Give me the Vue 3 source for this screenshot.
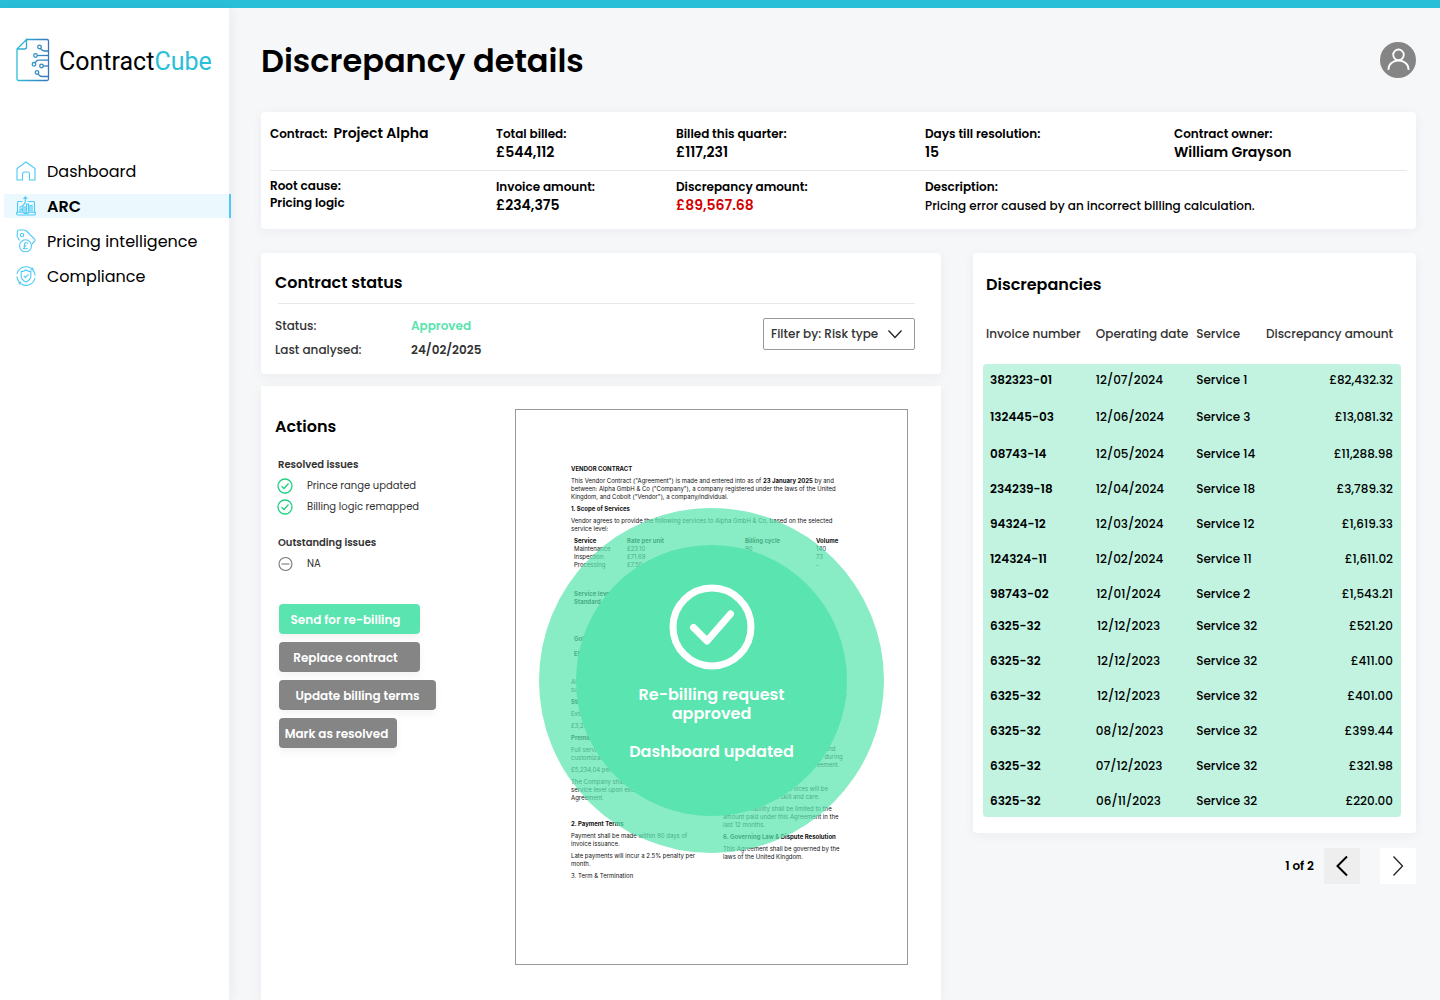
<script setup>
import { ref } from 'vue'

const filter = ref('risk')

const navItems = [
  { id: 'dashboard', label: 'Dashboard' },
  { id: 'arc', label: 'ARC', active: true },
  { id: 'pricing', label: 'Pricing intelligence' },
  { id: 'compliance', label: 'Compliance' },
]

const resolved = ['Prince range updated', 'Billing logic remapped']

const actions = [
  { label: 'Send for re-billing', kind: 'primary medium' },
  { label: 'Replace contract', kind: 'medium' },
  { label: 'Update billing terms', kind: 'large' },
  { label: 'Mark as resolved', kind: 'small' },
]

const discrepancies = [
  { invoice: '382323-01', date: '12/07/2024', service: 'Service 1', amount: '£82,432.32', size: 'roomy' },
  { invoice: '132445-03', date: '12/06/2024', service: 'Service 3', amount: '£13,081.32', size: 'roomy' },
  { invoice: '08743-14', date: '12/05/2024', service: 'Service 14', amount: '£11,288.98' },
  { invoice: '234239-18', date: '12/04/2024', service: 'Service 18', amount: '£3,789.32' },
  { invoice: '94324-12', date: '12/03/2024', service: 'Service 12', amount: '£1,619.33' },
  { invoice: '124324-11', date: '12/02/2024', service: 'Service 11', amount: '£1,611.02' },
  { invoice: '98743-02', date: '12/01/2024', service: 'Service 2', amount: '£1,543.21', size: 'tight' },
  { invoice: '6325-32', date: '12/12/2023', service: 'Service 32', amount: '£521.20' },
  { invoice: '6325-32', date: '12/12/2023', service: 'Service 32', amount: '£411.00' },
  { invoice: '6325-32', date: '12/12/2023', service: 'Service 32', amount: '£401.00' },
  { invoice: '6325-32', date: '08/12/2023', service: 'Service 32', amount: '£399.44' },
  { invoice: '6325-32', date: '07/12/2023', service: 'Service 32', amount: '£321.98' },
  { invoice: '6325-32', date: '06/11/2023', service: 'Service 32', amount: '£220.00', size: 'tight' },
]
</script>

<template>
  <div class="app">
    <div class="topbar"></div>
    <div class="shell">
      <aside class="sidebar">
        <a class="logo" href="#" aria-label="ContractCube">
          <svg width="34" height="44" viewBox="0 0 34 44" fill="none" stroke="url(#brand)" stroke-width="1.3">
            <defs>
              <linearGradient id="brand" gradientUnits="userSpaceOnUse" x1="0" y1="22" x2="34" y2="22">
                <stop offset="0" stop-color="#2abfd9" />
                <stop offset="1" stop-color="#3a72b8" />
              </linearGradient>
            </defs>
            <path d="M10.5 1.5H31a1.500 1.500 0 0 1 1.500 1.500V41a1.500 1.500 0 0 1-1.500 1.500H2.500A1.500 1.500 0 0 1 1 41V11L10.500 1.500V9a2 2 0 0 1-2 2H1" />
            <circle cx="23.500" cy="9" r="1.800" /><path d="M24.500 10.500q2 2.500 4 2.500H32.500" />
            <circle cx="19.500" cy="17.500" r="1.800" /><path d="M21.300 17.500H32.500" />
            <circle cx="18" cy="26.300" r="1.800" /><path d="M19 24.700l1.500-1.700q.7-.8 2-.8H32.500" />
            <circle cx="25.500" cy="28" r="1.800" /><path d="M27.300 28H32.500" />
            <circle cx="21" cy="34.500" r="1.800" /><path d="M22 36l1.500 1.500q1 1 2.500 1H32.500" />
          </svg>
          <span class="wordmark">Contract<b>Cube</b></span>
        </a>
        <nav class="nav">
          <a v-for="item in navItems" :key="item.id" href="#" class="nav-item" :class="{ active: item.active }">
            <svg v-if="item.id === 'dashboard'" width="20" height="20" viewBox="0 0 20 20">
              <path d="M1 7.500V19h5.500v-6q0-2 2-2h3q2 0 2 2v6H19V7.500L10 1z" />
            </svg>
            <svg v-else-if="item.id === 'arc'" width="20" height="20" viewBox="0 0 20 20">
              <path d="M6.500 5.500H2.500q-1 0-1 1V16M12 5.500h5.500q1 0 1 1V16M.7 16.300h18.600v1.400q0 1.300-1.300 1.300H2Q.7 19 .7 17.700zM7.500 17.500h5M4 15.500v-2.500h2v2.500M7 15.500V11h2v4.500M10.500 15.500V8h2v7.500M14 15.500V9.500h2v6M3.500 11.500Q8 9.500 9.300 6V1M7.500 2.800L9.300.8l1.800 2" />
            </svg>
            <svg v-else-if="item.id === 'pricing'" width="20" height="24" viewBox="0 0 20 24">
              <path d="M3.500 11.500L1.300 7.500q-.5-1 0-2V3Q1.300 1 3.300 1H8q1.500 0 2.500 1l8 8q1 1.300 0 2.500l-2.500 2.500" />
              <circle cx="6" cy="6" r="1.700" /><circle cx="9.500" cy="16.800" r="6" />
              <path d="M11.800 14.800q-.5-1.500-1.900-1.300t-1.400 1.800v2.200q0 1.300-1 2.300h4.300M7.500 17h3" />
            </svg>
            <svg v-else width="20" height="20" viewBox="0 0 20 20">
              <path d="M10 4q2 1.500 4.800 1.600V10q0 3.800-4.800 6-4.800-2.200-4.800-6V5.600Q8 5.500 10 4zM7.800 9.800l1.700 1.700 3-3.200M14.500 2A9.200 9.200 0 0 0 1 8M.8 10.500q.4 3.500 2.500 5.500M5.500 18.200A9.200 9.200 0 0 0 19 12M19.200 9.500q-.4-3.500-2.500-5.500" />
              <circle cx="16" cy="3" r="1" /><circle cx="4" cy="17" r="1" />
            </svg>
            <span>{{ item.label }}</span>
          </a>
        </nav>
      </aside>

      <main class="main">
        <header class="page-head">
          <h1>Discrepancy details</h1>
          <button class="avatar" aria-label="Account">
            <svg width="36" height="36" viewBox="0 0 36 36" fill="none" stroke="#fff" stroke-width="1.800">
              <circle cx="18.500" cy="12.800" r="5.300" /><path d="M8.500 28v-1a10 8.500 0 0 1 20 0v1" />
            </svg>
          </button>
        </header>

        <section class="card summary">
          <div class="facts first">
            <div class="inline-fact"><span class="label">Contract:</span><strong>Project Alpha</strong></div>
            <div class="fact"><span class="label">Total billed:</span><strong>£544,112</strong></div>
            <div class="fact"><span class="label">Billed this quarter:</span><strong>£117,231</strong></div>
            <div class="fact"><span class="label">Days till resolution:</span><strong>15</strong></div>
            <div class="fact"><span class="label">Contract owner:</span><strong>William Grayson</strong></div>
          </div>
          <div class="facts second">
            <div class="fact cause"><span class="label">Root cause:</span><span class="label">Pricing logic</span></div>
            <div class="fact"><span class="label">Invoice amount:</span><strong>£234,375</strong></div>
            <div class="fact"><span class="label">Discrepancy amount:</span><strong class="alert">£89,567.68</strong></div>
            <div class="fact wide"><span class="label">Description:</span><span class="note">Pricing error caused by an incorrect billing calculation.</span></div>
          </div>
        </section>

        <div class="columns">
          <div class="left">
            <section class="card status">
              <h2>Contract status</h2>
              <hr>
              <div class="status-body">
                <dl>
                  <dt>Status:</dt><dd class="approved">Approved</dd>
                  <dt>Last analysed:</dt><dd>24/02/2025</dd>
                </dl>
                <div class="filter">
                  <select v-model="filter" aria-label="Filter discrepancies">
                    <option value="risk">Filter by: Risk type</option>
                  </select>
                  <svg width="16" height="10" viewBox="0 0 16 10" fill="none" stroke="#222" stroke-width="1.300"><path d="M1.500 1.500L8 8.500l6.500-7" /></svg>
                </div>
              </div>
            </section>

            <section class="card workspace">
              <div class="actions">
                <h2>Actions</h2>
                <h3>Resolved issues</h3>
                <ul>
                  <li v-for="issue in resolved" :key="issue">
                    <svg width="16" height="16" viewBox="0 0 16 16" fill="none" stroke="#1fd184" stroke-width="1.300"><circle cx="8" cy="8" r="7" /><path d="M4.500 8.300L7 10.500 11.500 5.500" /></svg>
                    {{ issue }}
                  </li>
                </ul>
                <h3>Outstanding issues</h3>
                <ul>
                  <li>
                    <svg width="16" height="16" viewBox="0 0 16 16" fill="none" stroke="#777" stroke-width="1.100"><circle cx="8.500" cy="8" r="6.500" /><path d="M4.500 8h8" /></svg>
                    NA
                  </li>
                </ul>
                <div class="buttons">
                  <button v-for="action in actions" :key="action.label" :class="action.kind">{{ action.label }}</button>
                </div>
              </div>

              <article class="sheet">
                <h4>VENDOR CONTRACT</h4>
                <p>This Vendor Contract ("Agreement") is made and entered into as of <b>23 January 2025</b> by and<br>between: Alpha GmbH &amp; Co ("Company"), a company registered under the laws of the United<br>Kingdom, and Cobolt ("Vendor"), a company/individual.</p>
                <h4>1. Scope of Services</h4>
                <p>Vendor agrees to provide the following services to Alpha GmbH &amp; Co, based on the selected<br>service level:</p>
                <table class="rates">
                  <thead>
                    <tr><th>Service</th><th>Rate per unit</th><th>Billing cycle</th><th>Volume</th></tr>
                  </thead>
                  <tbody>
                    <tr><td>Maintenance</td><td>£23.10</td><td>90</td><td>140</td></tr>
                    <tr><td>Inspection</td><td>£71.69</td><td></td><td>73</td></tr>
                    <tr><td>Processing</td><td>£7.50</td><td></td><td>-</td></tr>
                  </tbody>
                </table>
                <div class="levels">
                  <b>Service level</b>
                  <b>Standard</b>
                  <b class="spaced">Gold</b>
                  <b class="spaced-small">Elite</b>
                </div>
                <div class="clauses">
                  <div class="clause-column">
                    <p>All<br>such</p>
                    <h4>Std</h4>
                    <p>Extra</p>
                    <p>£3,234</p>
                    <h4>Premium</h4>
                    <p>Full service<br>customization</p>
                    <p>£5,234,04 per</p>
                    <p class="clause-end">The Company shall<br>service level upon execution<br>Agreement.</p>
                    <h4>2. Payment Terms</h4>
                    <p>Payment shall be made within 90 days of<br>invoice issuance.</p>
                    <p>Late payments will incur a 2.5% penalty per<br>month.</p>
                    <p>3. Term &amp; Termination</p>
                  </div>
                  <div class="clause-column second">
                    <p class="tail">of either</p>
                    <p class="tail">action</p>
                    <p class="confidential">all terms and<br>the term during<br>of Agreement.</p>
                    <p class="warranty">Vendor warrants that services will be<br>performed with due skill and care.</p>
                    <p>Vendor's liability shall be limited to the<br>amount paid under this Agreement in the<br>last 12 months.</p>
                    <h4>6. Governing Law &amp; Dispute Resolution</h4>
                    <p>This Agreement shall be governed by the<br>laws of the United Kingdom.</p>
                  </div>
                </div>

                <div class="stamp" role="status">
                  <div class="stamp-core">
                    <svg width="86" height="86" viewBox="0 0 86 86" fill="none" stroke="#fff" stroke-width="7">
                      <circle cx="43" cy="43" r="39" />
                      <path d="M24.500 43.500L38 57 61.500 30" stroke-linecap="round" stroke-linejoin="round" />
                    </svg>
                    <p>Re-billing request<br>approved</p>
                    <p>Dashboard updated</p>
                  </div>
                </div>
              </article>
            </section>
          </div>

          <div class="right">
            <section class="card list">
              <h2>Discrepancies</h2>
              <table class="grid">
                <colgroup><col class="c1"><col class="c2"><col class="c3"><col class="c4"></colgroup>
                <thead>
                  <tr><th>Invoice number</th><th>Operating date</th><th>Service</th><th>Discrepancy amount</th></tr>
                </thead>
                <tbody>
                  <tr v-for="(row, i) in discrepancies" :key="i" :class="row.size">
                    <td>{{ row.invoice }}</td><td>{{ row.date }}</td><td>{{ row.service }}</td><td>{{ row.amount }}</td>
                  </tr>
                </tbody>
              </table>
            </section>
            <div class="pager">
              <span>1 of 2</span>
              <button class="prev" aria-label="Previous page"><svg width="36" height="36" viewBox="0 0 36 36" fill="none" stroke="#000" stroke-width="2"><path d="M23 8.500L13.500 18 23 27.500" /></svg></button>
              <button class="next" aria-label="Next page"><svg width="36" height="36" viewBox="0 0 36 36" fill="none" stroke="#222" stroke-width="1.300"><path d="M13.500 8.500L22.500 18l-9 9.500" /></svg></button>
            </div>
          </div>
        </div>
      </main>
    </div>
  </div>
</template>

<style>
body { background: #f6f7f9; }
</style>

<style scoped>
* { box-sizing: border-box; margin: 0; padding: 0; }
button, select { font: inherit; border: 0; cursor: pointer; }
a { color: inherit; text-decoration: none; }
ul { list-style: none; }
hr { border: 0; border-top: 1px solid #e8e8e8; }

.app {
  display: flex;
  flex-direction: column;
  min-height: 100vh;
  color: #000;
  font: 500 13px/20px Poppins, Inter, sans-serif;
}
.topbar { height: 8px; background: #2abfd9; }
.shell { display: flex; flex: 1; }

.sidebar { flex: none; width: 229px; background: #fff; box-shadow: 2px 0 12px rgba(30, 40, 60, 0.06); }
.logo { display: flex; align-items: center; gap: 9px; padding: 30px 0 0 16px; }
.wordmark { font: 400 25px/32px Roboto, sans-serif; padding-top: 4px; }
.wordmark b { font-weight: 400; color: #2abfd9; }
.nav { display: flex; flex-direction: column; gap: 11px; margin: 77px -2px 0 4px; }
.nav-item { display: flex; align-items: center; gap: 11px; height: 24px; padding-left: 12px; font-size: 16px; line-height: 22px; font-weight: 400; border-right: 2px solid transparent; }
.nav-item span { padding-top: 2px; }
.nav-item svg { fill: none; stroke: #4cc9f5; stroke-width: 1.100; }
.nav-item.active { background: #ebf9ff; border-color: #4cc9f5; font-weight: 600; }

.main { flex: 1; min-width: 0; display: flex; flex-direction: column; padding: 34px 24px 0 32px; }
.page-head { display: flex; align-items: center; justify-content: space-between; height: 36px; margin-bottom: 34px; }
h1 { font-size: 32px; line-height: 36px; font-weight: 600; padding-top: 1px; }
.avatar { width: 36px; height: 36px; border-radius: 50%; background: #858585; }

.card { background: #fff; border-radius: 4px; box-shadow: 0 2px 12px rgba(30, 40, 60, 0.05); }
h2 { font-size: 16px; line-height: 24px; font-weight: 600; }

.summary { padding: 12px 9px 14px; }
.facts { display: grid; grid-template-columns: 226fr 180fr 249fr 249fr 233fr; }
.facts.first { height: 46px; }
.facts.second { height: 45px; padding-top: 6px; border-top: 1px solid #e8e8e8; }
.fact { display: flex; flex-direction: column; }
.wide { grid-column: span 2; }
.label { font-size: 12px; line-height: 19px; font-weight: 600; }
.cause .label { line-height: 17px; }
.inline-fact { display: flex; gap: 6px; }
.facts strong { font-size: 14px; line-height: 19px; font-weight: 600; }
.facts .alert { color: #d30000; }
.note { font-size: 12px; line-height: 19px; }

.columns { flex: 1; display: grid; grid-template-columns: 680fr 443fr; gap: 32px; margin-top: 24px; }
.left { display: flex; flex-direction: column; gap: 12px; min-width: 0; }
.status { padding: 18px 26px 12px 14px; }
.status hr { margin: 8px 0 0 3px; }
.status-body { display: flex; justify-content: space-between; padding-top: 10px; }
dl { display: grid; grid-template-columns: 136px auto; line-height: 24px; font-size: 12px; color: #333; }
dd { font-weight: 600; }
.approved { color: #5ae4af; }
.filter { position: relative; align-self: flex-start; margin-top: 4px; }
.filter select { width: 152px; height: 32px; padding: 0 7px; appearance: none; background: #fff; border: 1px solid #999; border-radius: 2px; color: #333; font-size: 12px; }
.filter svg { position: absolute; right: 12px; top: 11px; pointer-events: none; }

.workspace { flex: 1; display: flex; justify-content: space-between; align-items: flex-start; border-radius: 0; padding: 23px 33px 35px 14px; }
.actions { padding-top: 6px; color: #333; }
.actions h2 { color: #000; margin-bottom: 16px; }
h3 { font-size: 10px; line-height: 20px; font-weight: 600; margin-left: 3px; }
.actions ul { margin-bottom: 16px; }
li { display: flex; align-items: center; gap: 14px; height: 21px; padding-left: 2px; font-size: 10px; font-weight: 400; }
.buttons { display: flex; flex-direction: column; gap: 8px; margin: 30px 0 0 4px; }
.buttons button { height: 30px; padding-top: 2px; border-radius: 4px; background: #858585; color: #fff; font-size: 12px; font-weight: 600; box-shadow: 0 4px 8px rgba(0, 0, 0, 0.05); }
.buttons .primary { background: #5ae4af; }
.buttons .small { width: 118px; padding-right: 3px; }
.buttons .medium { width: 141px; padding-right: 8px; }
.buttons .large { width: 157px; }

.sheet { position: relative; flex: none; width: 393px; height: 556px; padding: 55px 55px 0; border: 1px solid #999; background: #fff; color: #111; font: 400 6px/8px Inter, Arial, sans-serif; white-space: nowrap; }
.sheet h4, .sheet > p, .clauses p { margin-bottom: 4px; font-size: 6px; }
.rates { width: 100%; margin-left: 2px; border-collapse: collapse; table-layout: fixed; text-align: left; }
.rates th:nth-child(1) { width: 53px; }
.rates th:nth-child(2) { width: 118px; }
.rates th:nth-child(3) { width: 71px; }
.rates td, .rates th { padding-left: 1px; height: 8px; line-height: 8px; }
.levels { display: flex; flex-direction: column; margin: 21px 0 20px 3px; }
.spaced { margin-top: 29px; }
.spaced-small { margin-top: 7px; }
.clauses { display: grid; grid-template-columns: 152px 1fr; }
.clauses .clause-end { margin-bottom: 18px; }
.clause-column.second { padding-top: 15px; }
.clauses .tail { margin-bottom: 12px; padding-left: 100px; }
.clauses .confidential { margin: 24px 0 16px; padding-left: 76px; }

.stamp { position: absolute; top: 98px; left: 23px; width: 345px; height: 345px; padding: 37px; border-radius: 50%; background: rgba(90, 228, 175, 0.72); }
.stamp-core { display: flex; flex-direction: column; align-items: center; gap: 19px; width: 271px; height: 271px; padding-top: 39px; border-radius: 50%; background: #5ae4af; color: #fff; font: 600 16px/19px Poppins, Inter, sans-serif; text-align: center; }
.stamp-core svg { margin-bottom: -4px; }

.right { min-width: 0; }
.list { padding: 20px 15px 16px 10px; }
.list h2 { margin-left: 3px; }
.grid { width: 100%; border-collapse: separate; border-spacing: 0; table-layout: fixed; margin-top: 27px; font-size: 12px; white-space: nowrap; }
.c1 { width: 27%; }
.c2 { width: 24%; }
.c3 { width: 16%; }
.c4 { width: 33%; }
.grid th { height: 40px; padding-bottom: 20px; text-align: left; font-weight: 500; color: #333; }
.grid th:first-child { padding-left: 3px; }
.grid td { height: 35px; padding-top: 6px; vertical-align: top; background: #c1f3e0; }
.grid .roomy td { height: 37px; }
.grid .tight td { height: 32px; }
.grid td:first-child { padding-left: 7px; font-weight: 600; }
.grid td:nth-child(2) { padding-right: 35px; text-align: center; }
.grid th:last-child, .grid td:last-child { text-align: right; padding-right: 8px; }
.grid tbody tr:first-child td:first-child { border-top-left-radius: 4px; }
.grid tbody tr:first-child td:last-child { border-top-right-radius: 4px; }
.grid tbody tr:last-child td:first-child { border-bottom-left-radius: 4px; }
.grid tbody tr:last-child td:last-child { border-bottom-right-radius: 4px; }

.pager { display: flex; justify-content: flex-end; align-items: center; margin-top: 15px; font-size: 12px; font-weight: 600; }
.pager button { width: 36px; height: 36px; }
.prev { margin: 0 20px 0 10px; background: #eee; }
.next { background: #fff; }
</style>
